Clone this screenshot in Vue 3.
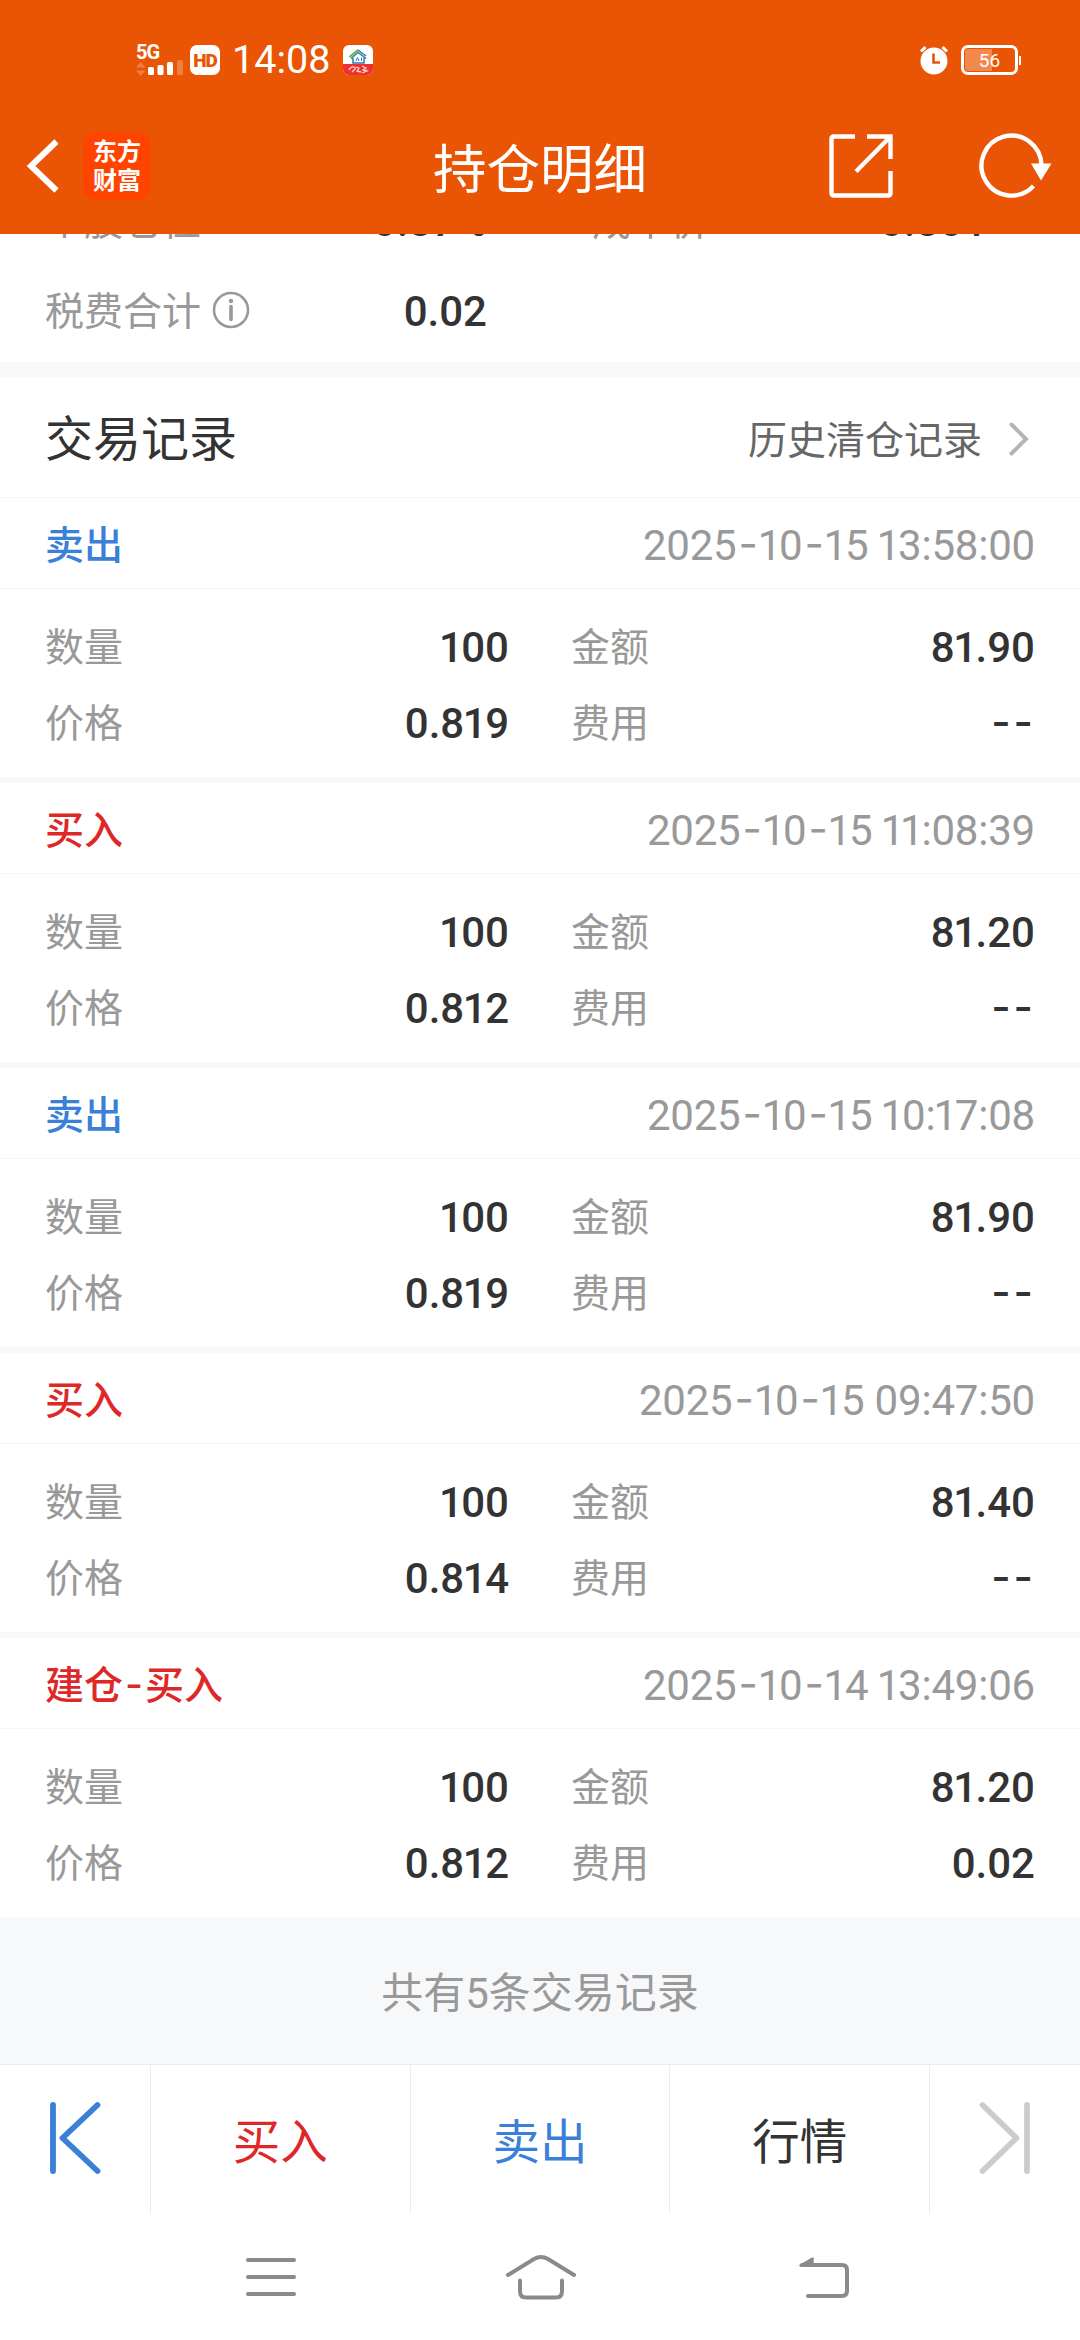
<script setup>
const records = [
  { type: '卖出', side: 'sell', time: '2025-10-15 13:58:00', price: '0.819', amount: '81.90', fee: '--' },
  { type: '买入', side: 'buy', time: '2025-10-15 11:08:39', price: '0.812', amount: '81.20', fee: '--' },
  { type: '卖出', side: 'sell', time: '2025-10-15 10:17:08', price: '0.819', amount: '81.90', fee: '--' },
  { type: '买入', side: 'buy', time: '2025-10-15 09:47:50', price: '0.814', amount: '81.40', fee: '--' },
  { type: '建仓-买入', side: 'buy', time: '2025-10-14 13:49:06', price: '0.812', amount: '81.20', fee: '0.02' },
]

// Hyphens get a wider face and the digit one a narrower advance.
const pieces = (text) => text.split(/([-1])/).filter(Boolean)
const pieceClass = (p) => ({ dash: p === '-', one: p === '1' })
</script>

<template>
  <div class="screen">
    <header class="top">
      <div class="status">
        <div class="signal">
          <span class="net">5G</span>
          <svg width="48" height="18" viewBox="0 0 48 18">
            <path d="M0 7.500 4.700 2l4.700 5.500zM0 10.500h9.400L4.700 16z" fill="#fff" opacity=".25" />
            <rect x="12" y="7" width="6" height="8" rx="1.500" fill="#fff" />
            <rect x="21.500" y="5" width="6" height="10" rx="1.500" fill="#fff" />
            <rect x="31" y="2" width="6" height="13" rx="1.500" fill="#fff" />
            <rect x="41" y="0" width="6" height="15" rx="1.500" fill="#fff" opacity=".25" />
          </svg>
        </div>
        <span class="hd">HD</span>
        <span class="clock">14:08</span>
        <svg class="appicon" width="30" height="30" viewBox="0 0 30 30">
          <rect width="30" height="30" rx="6" fill="#fff" />
          <path d="M0 19h30v5a6 6 0 0 1-6 6H6a6 6 0 0 1-6-6z" fill="#ef2f35" />
          <path d="M6.500 12 15 5" stroke="#6bb13f" stroke-width="2" fill="none" />
          <path d="m8 13.500 7-6 8 6M10 13v5h11v-5M15 5l8 6" stroke="#2a7fa6" stroke-width="1.500" fill="none" />
          <path d="m13 16 1.500-3.500L16 16M18.500 12.500V16" stroke="#2a7fd0" stroke-width="1" fill="none" />
          <path d="M6 25q2-4 5-3t-2 5M13 22l3 1-2 3 4 1M19 21l4 2-3 2 4 1-5 2" stroke="#ffd9c0" stroke-width="1.300" fill="none" />
        </svg>
        <svg class="alarm" width="30" height="30" viewBox="0 0 30 30">
          <circle cx="15" cy="16" r="13.500" fill="#fff" />
          <path d="M2 6.500 6.500 2M28 6.500 23.500 2" stroke="#fff" stroke-width="3" />
          <path d="M14.500 8.500v9h6.500" stroke="#e95504" stroke-width="2.600" fill="none" />
        </svg>
        <div class="battery"><span>56</span></div>
      </div>

      <div class="titlebar">
        <svg class="back" width="36" height="60" viewBox="0 0 36 60">
          <path d="M31.500 5.500 6 30l25.500 24.500" fill="none" stroke="#fff" stroke-width="6" />
        </svg>
        <div class="logo"><span>东方</span><span>财富</span></div>
        <h1>持仓明细</h1>
        <svg class="share" width="66" height="66" viewBox="0 0 66 66">
          <path d="M27 3.500H5.500a2 2 0 0 0-2 2v55a2 2 0 0 0 2 2h55a2 2 0 0 0 2-2V38M39 3.500h23.500V26M28 38.500 62 4" fill="none" stroke="#fff" stroke-width="4.400" />
        </svg>
        <svg class="refresh" width="74" height="68" viewBox="0 0 74 68">
          <path d="M62.500 34A30 30 0 1 0 54.500 54" fill="none" stroke="#fff" stroke-width="4.400" />
          <path d="M52 31.500h20.500L62 48.500z" fill="#fff" />
        </svg>
      </div>
    </header>

    <main>
      <section class="summary">
        <div class="srow">
          <span class="label">个股仓位</span><span class="num first">0.87%</span>
          <span class="label second">成本价</span><span class="num last">0.801</span>
        </div>
        <div class="srow">
          <span class="label">税费合计
            <svg width="38" height="38" viewBox="0 0 38 38">
              <circle cx="19" cy="19" r="17" fill="none" stroke="#999" stroke-width="2.600" />
              <circle cx="19" cy="10" r="2.200" fill="#999" />
              <path d="M19 15.500v13" stroke="#999" stroke-width="3.600" stroke-linecap="round" />
            </svg>
          </span>
          <span class="num first">0.02</span>
        </div>
      </section>

      <div class="heading">
        <h2>交易记录</h2>
        <a><span>历史清仓记录</span>
          <svg width="22" height="36" viewBox="0 0 22 36">
            <path d="m3.500 3.500 14.500 14.500L3.500 32.500" fill="none" stroke="#b5b5b5" stroke-width="4" stroke-linecap="round" />
          </svg>
        </a>
      </div>

      <article v-for="r in records" :key="r.time" class="record">
        <div class="rhead">
          <b :class="r.side"><span v-for="(p, i) in pieces(r.type)" :key="i" :class="pieceClass(p)">{{ p }}</span></b>
          <time><span v-for="(p, i) in pieces(r.time)" :key="i" :class="pieceClass(p)">{{ p }}</span></time>
        </div>
        <div class="grid">
          <span class="label">数量</span>
          <span class="num"><span class="one">1</span>00</span>
          <span class="label col2">金额</span>
          <span class="num"><span v-for="(p, i) in pieces(r.amount)" :key="i" :class="pieceClass(p)">{{ p }}</span></span>
          <span class="label">价格</span>
          <span class="num"><span v-for="(p, i) in pieces(r.price)" :key="i" :class="pieceClass(p)">{{ p }}</span></span>
          <span class="label col2">费用</span>
          <span class="num" :class="{ none: r.fee === '--' }">{{ r.fee }}</span>
        </div>
      </article>
    </main>

    <div class="total">共有5条交易记录</div>

    <nav class="tabs">
      <div class="edge">
        <svg width="54" height="74" viewBox="0 0 54 74">
          <path d="M5 4v66M49.500 4 14.500 37l35 33" fill="none" stroke="#3a7fd8" stroke-width="5.800" stroke-linecap="round" stroke-linejoin="round" />
        </svg>
      </div>
      <div class="tab buy">买入</div>
      <div class="tab sell">卖出</div>
      <div class="tab">行情</div>
      <div class="edge">
        <svg width="54" height="74" viewBox="0 0 54 74">
          <path d="M49 4v66M4.500 4l34 33-34 33" fill="none" stroke="#ccc" stroke-width="5.800" stroke-linecap="round" stroke-linejoin="round" />
        </svg>
      </div>
    </nav>

    <div class="sysnav">
      <svg width="50" height="40" viewBox="0 0 50 40">
        <path d="M2 3h46M2 20h46M2 37h46" />
      </svg>
      <svg width="72" height="46" viewBox="0 0 72 46">
        <path d="M3 22.500 29 6.500q7-4 14 0l26 16M15 28v11q0 6 6 6h30q6 0 6-6V28" transform="translate(0 -1.500)" />
      </svg>
      <svg class="return" width="52" height="44" viewBox="0 0 52 44">
        <path d="M10 41h34q5 0 5-5V15q0-5-5-5H4" />
        <path class="tip" d="M2.500 10.500 14.500 3.500v7z" />
      </svg>
    </div>
  </div>
</template>

<style>
body {
  background: #fff;
}
</style>

<style scoped>
.screen {
  width: 1080px;
  height: 2340px;
  display: flex;
  flex-direction: column;
  overflow: hidden;
  background: #fff;
  color: #333;
  font-family: Roboto, "Noto Sans CJK SC", sans-serif;
}
h1, h2 {
  margin: 0;
  font-weight: 400;
}
svg {
  display: block;
  flex: none;
}
.top {
  height: 234px;
  flex: none;
  background: #e95504;
  color: #fff;
  position: relative;
  z-index: 1;
}
.status {
  height: 120px;
  padding: 0 59px 0 136px;
  display: flex;
  align-items: center;
}
.signal {
  width: 54px;
  height: 36px;
}
.net {
  display: block;
  height: 18px;
  font: 700 20px/20px Roboto, sans-serif;
  letter-spacing: -1px;
}
.hd {
  width: 30px;
  height: 30px;
  border-radius: 7px;
  background: #fff;
  color: #e95504;
  font: 900 19px/31px Roboto, sans-serif;
  letter-spacing: -1px;
  text-align: center;
}
.clock {
  width: 110px;
  margin-left: 12px;
  font-size: 39.500px;
  line-height: 40px;
}
.appicon {
  margin-left: 1px;
}
.alarm {
  margin-left: auto;
}
.battery {
  box-sizing: border-box;
  width: 57px;
  height: 30px;
  margin: 0 3px 0 12px;
  border: 3px solid #fff;
  border-radius: 7px;
  box-shadow: inset 0 0 0 1px #e95504;
  background: linear-gradient(90deg, #f28a50 55%, transparent 55%);
  position: relative;
  font-size: 19px;
  line-height: 25px;
  text-align: center;
}
.battery::after {
  content: "";
  position: absolute;
  right: -6px;
  top: 8px;
  width: 2px;
  height: 9px;
  background: #fff;
}
.titlebar {
  height: 92px;
  display: flex;
  align-items: center;
  padding: 0 27px 0 25px;
}
.logo {
  width: 68px;
  height: 68px;
  box-sizing: border-box;
  padding-top: 3px;
  margin-left: 22px;
  border-radius: 14px;
  background: #f40;
  font: 700 24px/29px "Noto Sans CJK SC", sans-serif;
  text-align: center;
}
.logo span {
  display: block;
}
h1 {
  flex: 1;
  padding: 10px 0 0 101px;
  text-align: center;
  font-size: 53.500px;
  line-height: 76px;
}
.share {
  margin-right: 85px;
}
main {
  flex: none;
  height: 1683px;
  overflow: hidden;
}
.summary {
  margin-top: -59px;
  padding-bottom: 7px;
  border-bottom: 15px solid #f7f8fa;
}
.srow {
  box-sizing: border-box;
  height: 90px;
  padding: 4px 45px 0;
  display: flex;
  align-items: center;
}
.label {
  color: #999;
  font-size: 39px;
  line-height: 60px;
}
.srow .label {
  width: 240px;
  display: flex;
  align-items: center;
  gap: 11px;
}
.srow svg {
  margin-bottom: 4px;
}
.num {
  font-size: 42px;
  font-weight: 500;
  line-height: 60px;
  text-align: right;
}
.one {
  margin: 0 -2px;
}
.num .one {
  margin: 0 -1.500px;
}
.first {
  width: 202px;
}
.srow .second {
  margin-left: 105px;
  width: 200px;
}
.last {
  width: 195px;
}
.heading {
  height: 120px;
  padding: 0 50px 0 45px;
  border-bottom: 1px solid #f4f5f7;
  display: flex;
  align-items: center;
  justify-content: space-between;
}
h2 {
  padding-top: 6px;
  font-size: 48px;
  line-height: 70px;
}
.heading a {
  display: flex;
  align-items: center;
  gap: 26px;
  color: #666;
  font-size: 39px;
  line-height: 60px;
}
.heading a span {
  padding-top: 8px;
}
.heading a svg {
  margin-top: 3px;
}
.record {
  height: 279px;
  border-bottom: 6px solid #f7f8fa;
}
.rhead {
  box-sizing: border-box;
  height: 91px;
  padding: 5px 45px 0;
  display: flex;
  align-items: center;
  justify-content: space-between;
  border-bottom: 1px solid #f4f5f7;
}
.rhead b {
  font-size: 39px;
  font-weight: 500;
  line-height: 60px;
}
time {
  color: #999;
  font-size: 42px;
  line-height: 60px;
  letter-spacing: -0.200px;
}
.dash {
  margin: 0 2px;
  font-family: Inter, sans-serif;
  line-height: 1;
  vertical-align: 1px;
}
.buy {
  color: #de2828;
}
.sell {
  color: #3a7fd8;
}
.grid {
  display: grid;
  grid-template-columns: 100px 364px 162px 1fr;
  grid-auto-rows: 76px;
  align-items: center;
  padding: 21px 45px 0;
}
.col2 {
  padding-left: 62px;
}
.none {
  padding-bottom: 5px;
  font-family: Inter, sans-serif;
  letter-spacing: 3px;
  margin-right: -1px;
}
.total {
  box-sizing: border-box;
  height: 147px;
  padding-top: 3px;
  flex: none;
  background: #f7f8fa;
  color: #999;
  font-size: 42px;
  line-height: 147px;
  text-align: center;
}
.tabs {
  height: 149px;
  flex: none;
  border-top: 1px solid #e9ebee;
  display: flex;
}
.edge {
  width: 150px;
  display: flex;
  align-items: center;
  justify-content: center;
}
.edge svg {
  margin-bottom: 4px;
}
.tab {
  flex: 1;
  border-left: 1px solid #ececec;
  font-size: 47.500px;
  line-height: 156px;
  height: 149px;
  text-align: center;
}
.tab + .edge {
  border-left: 1px solid #ececec;
}
.sysnav {
  flex: 1;
  display: grid;
  grid-template-columns: repeat(3, 270px);
  justify-content: center;
  justify-items: center;
  align-items: center;
}
.sysnav svg {
  margin-left: 2px;
}
.sysnav .return {
  margin-left: 27px;
}
.sysnav path {
  fill: none;
  stroke: #8a8a8a;
  stroke-width: 4;
  stroke-linecap: round;
}
.sysnav .tip {
  fill: #8a8a8a;
  stroke-width: 2.500;
  stroke-linejoin: round;
}
</style>
